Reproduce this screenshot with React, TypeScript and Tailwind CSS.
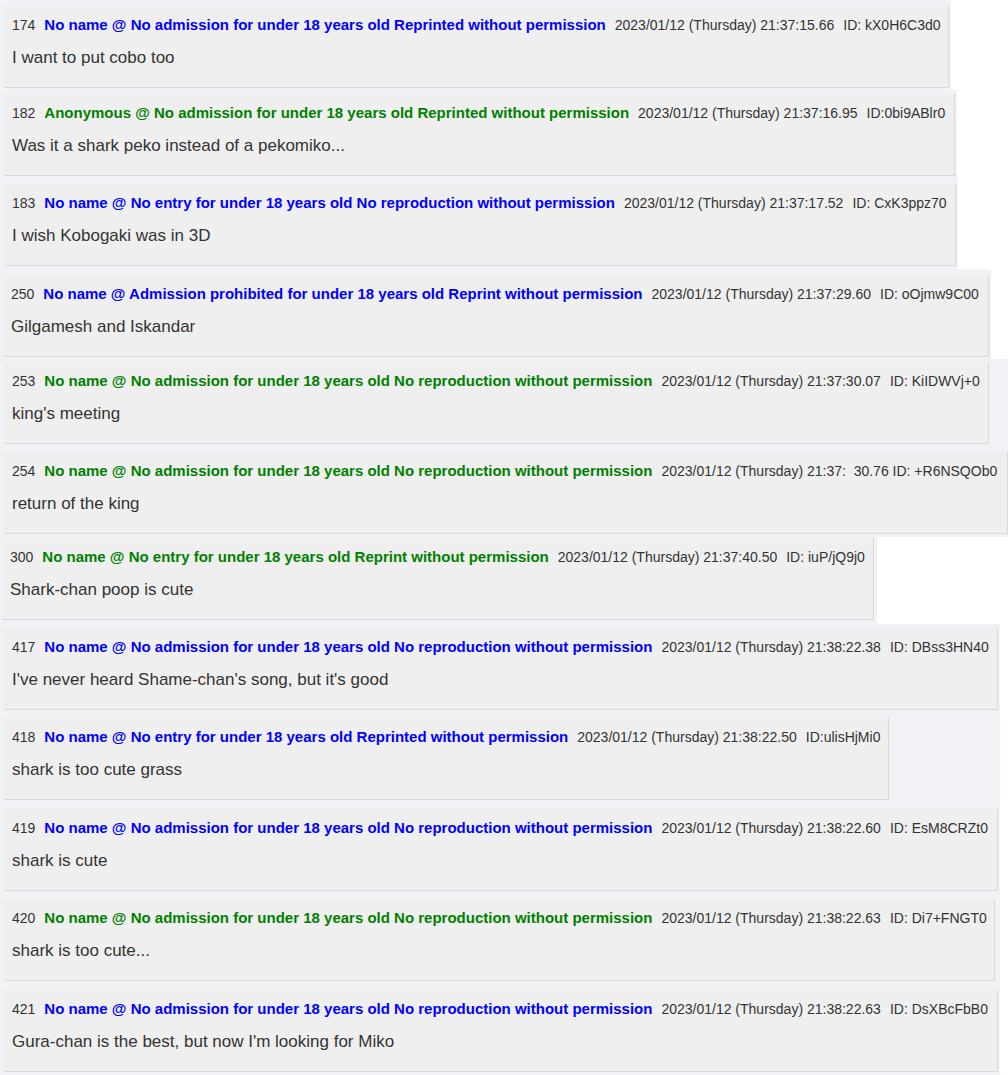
type Post = {
  num: string;
  name: string;
  green?: boolean;
  meta: string;
  id?: string;
  body: string;
  strip: string;
  box: string;
};

const posts: Post[] = [
  {
    num: '174',
    name: 'No name @ No admission for under 18 years old Reprinted without permission',
    meta: '2023/01/12 (Thursday) 21:37:15.66',
    id: 'ID: kX0H6C3d0',
    body: 'I want to put cobo too',
    strip: 'w-[951px] h-[90px] pt-[6px] pl-[4px]',
    box: 'w-[945px]',
  },
  {
    num: '182',
    name: 'Anonymous @ No admission for under 18 years old Reprinted without permission',
    green: true,
    meta: '2023/01/12 (Thursday) 21:37:16.95',
    id: 'ID:0bi9ABlr0',
    body: 'Was it a shark peko instead of a pekomiko...',
    strip: 'w-[957px] h-[89px] pt-[4px] pl-[4px]',
    box: 'w-[951px]',
  },
  {
    num: '183',
    name: 'No name @ No entry for under 18 years old No reproduction without permission',
    meta: '2023/01/12 (Thursday) 21:37:17.52',
    id: 'ID: CxK3ppz70',
    body: 'I wish Kobogaki was in 3D',
    strip: 'w-[958px] h-[90px] pt-[5px] pl-[4px]',
    box: 'w-[952px]',
  },
  {
    num: '250',
    name: 'No name @ Admission prohibited for under 18 years old Reprint without permission',
    meta: '2023/01/12 (Thursday) 21:37:29.60',
    id: 'ID: oOjmw9C00',
    body: 'Gilgamesh and Iskandar',
    strip: 'w-[991px] h-[90px] pt-[6px] pl-[3px]',
    box: 'w-[986px]',
  },
  {
    num: '253',
    name: 'No name @ No admission for under 18 years old No reproduction without permission',
    green: true,
    meta: '2023/01/12 (Thursday) 21:37:30.07',
    id: 'ID: KiIDWVj+0',
    body: "king's meeting",
    strip: 'w-full h-[89px] pt-[3px] pl-[4px]',
    box: 'w-[985px]',
  },
  {
    num: '254',
    name: 'No name @ No admission for under 18 years old No reproduction without permission',
    green: true,
    meta: '2023/01/12 (Thursday) 21:37:  30.76 ID: +R6NSQOb0',
    body: 'return of the king',
    strip: 'w-full h-[89px] pt-[4px] pl-[4px]',
    box: 'w-[1004px]',
  },
  {
    num: '300',
    name: 'No name @ No entry for under 18 years old Reprint without permission',
    green: true,
    meta: '2023/01/12 (Thursday) 21:37:40.50',
    id: 'ID: iuP/jQ9j0',
    body: 'Shark-chan poop is cute',
    strip: 'w-[877px] h-[87px] pt-[1px] pl-[2px]',
    box: 'w-[872px]',
  },
  {
    num: '417',
    name: 'No name @ No admission for under 18 years old No reproduction without permission',
    meta: '2023/01/12 (Thursday) 21:38:22.38',
    id: 'ID: DBss3HN40',
    body: "I've never heard Shame-chan's song, but it's good",
    strip: 'w-[1000px] h-[89px] pt-[4px] pl-[4px]',
    box: 'w-[994px]',
  },
  {
    num: '418',
    name: 'No name @ No entry for under 18 years old Reprinted without permission',
    meta: '2023/01/12 (Thursday) 21:38:22.50',
    id: 'ID:ulisHjMi0',
    body: 'shark is too cute grass',
    strip: 'w-[1000px] h-[91px] pt-[5px] pl-[4px]',
    box: 'w-[885px]',
  },
  {
    num: '419',
    name: 'No name @ No admission for under 18 years old No reproduction without permission',
    meta: '2023/01/12 (Thursday) 21:38:22.60',
    id: 'ID: EsM8CRZt0',
    body: 'shark is cute',
    strip: 'w-[1000px] h-[90px] pt-[5px] pl-[4px]',
    box: 'w-[994px]',
  },
  {
    num: '420',
    name: 'No name @ No admission for under 18 years old No reproduction without permission',
    green: true,
    meta: '2023/01/12 (Thursday) 21:38:22.63',
    id: 'ID: Di7+FNGT0',
    body: 'shark is too cute...',
    strip: 'w-[1000px] h-[91px] pt-[5px] pl-[4px]',
    box: 'w-[991px]',
  },
  {
    num: '421',
    name: 'No name @ No admission for under 18 years old No reproduction without permission',
    meta: '2023/01/12 (Thursday) 21:38:22.63',
    id: 'ID: DsXBcFbB0',
    body: "Gura-chan is the best, but now I'm looking for Miko",
    strip: 'w-[1000px] h-[90px] pt-[5px] pl-[4px]',
    box: 'w-[994px]',
  },
];

function PostRow({ post }: { post: Post }) {
  return (
    <div className={`bg-[#f1f2f6] ${post.strip}`}>
      <div
        className={`h-[82px] bg-[#efefef] border-r border-b border-[#d8d8d8] px-2 pt-[11px] ${post.box}`}
      >
        <div className="flex items-baseline whitespace-pre text-[14px] leading-[16px] text-[#333]">
          <span>{post.num}</span>
          <span
            className={`ml-[9px] text-[15px] font-bold ${post.green ? 'text-[#008000]' : 'text-[#0000ff]'}`}
          >
            {post.name}
          </span>
          <span className="ml-[9px]">{post.meta}</span>
          {post.id && <span className="ml-[9px]">{post.id}</span>}
        </div>
        <p className="mt-[15px] text-[17px] leading-[20px] text-[#333] whitespace-nowrap">
          {post.body}
        </p>
      </div>
    </div>
  );
}

export default function App() {
  return (
    <div className="w-[1008px] h-[1075px] overflow-hidden bg-white font-['Liberation_Sans',Arial,sans-serif]">
      {posts.map((post) => (
        <PostRow key={post.num} post={post} />
      ))}
    </div>
  );
}
